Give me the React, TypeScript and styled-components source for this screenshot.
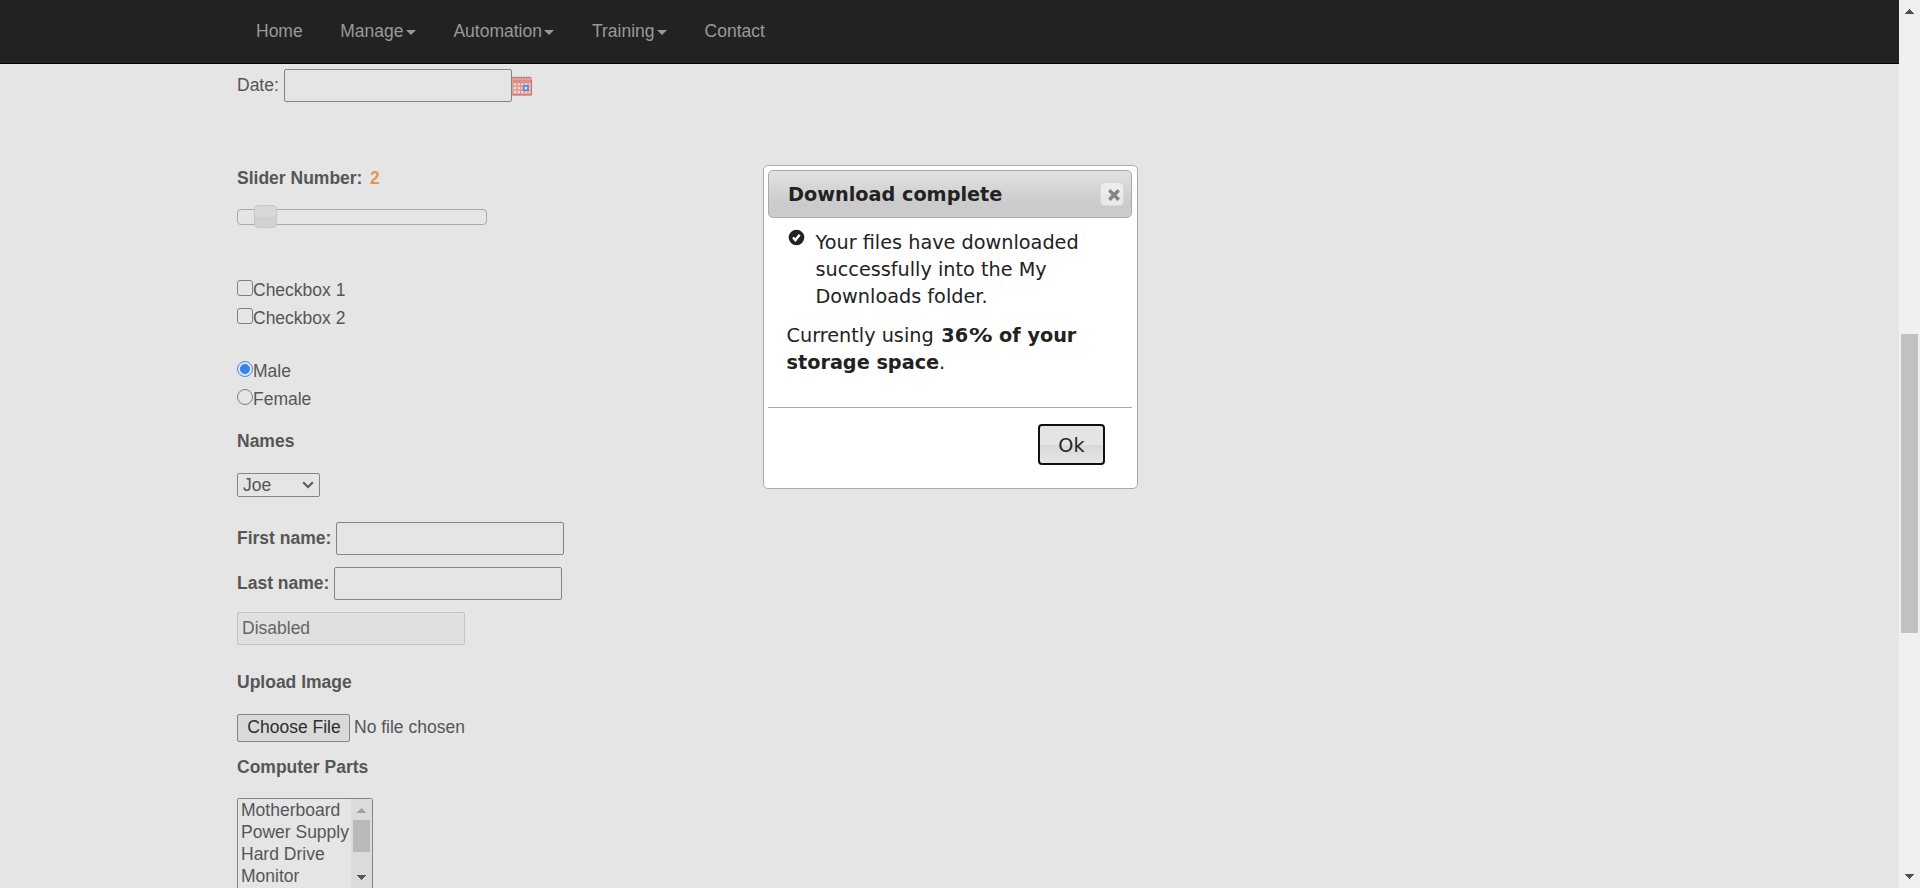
import React from 'react';
import styled, { createGlobalStyle } from 'styled-components';

const Global = createGlobalStyle`
  *, *::before, *::after { box-sizing: border-box; }
  html, body { margin: 0; padding: 0; overflow: hidden; }
  body { background: #e5e5e5; color: #565656; font: 17.5px/28px "Liberation Sans", Arial, sans-serif; }
  input, select, button { font: inherit; color: inherit; margin: 0; }
`;

const Screen = styled.div`
  display: flex;
  width: 1920px;
  height: 888px;
  overflow: hidden;
`;

const Page = styled.div`
  position: relative;
  flex: 1;
  display: flex;
  flex-direction: column;
`;

const Nav = styled.nav`
  height: 64px;
  flex: none;
  display: flex;
  align-items: flex-start;
  gap: 37.5px;
  padding: 17px 0 0 256px;
  background: #222;
  border-bottom: 1px solid #050505;
  color: #999;
`;

const NavItem = styled.a`
  display: flex;
  align-items: center;
  height: 28px;
`;

const Caret = styled.i`
  margin: 3px 0 0 2.5px;
  border: 5px solid transparent;
  border-top-color: #999;
  border-bottom: 0;
`;

const Form = styled.main`
  display: flex;
  flex-direction: column;
  align-items: flex-start;
  padding: 5px 0 0 237px;
`;

const Row = styled.div<{ $gap?: number; $before?: number }>`
  display: flex;
  align-items: center;
  white-space: pre;
  gap: ${p => p.$gap ?? 0}px;
  margin-top: ${p => p.$before ?? 0}px;
`;

const Heading = styled.div<{ $before: number }>`
  height: 28px;
  margin-top: ${p => p.$before}px;
  font-weight: bold;
  white-space: pre;
`;

const Value = styled.span`
  margin-left: 7.5px;
  color: #e6954a;
`;

const Label = styled.label<{ $bold?: boolean }>`
  margin-bottom: 2px;
  font-weight: ${p => (p.$bold ? 'bold' : 'normal')};
`;

const TextInput = styled.input`
  width: 228px;
  height: 33px;
  padding: 0 4px;
  border: 1px solid #858585;
  border-radius: 2px;
  background: transparent;
  &:disabled { border-color: #c3c3c3; background: #e0e0e0; color: #656565; }
`;

const Track = styled.div`
  width: 250px;
  height: 16px;
  margin-top: 17px;
  border: 1px solid #a9a9a9;
  border-radius: 4px;
`;

const Handle = styled.div`
  width: 23px;
  height: 23px;
  margin: -5px 0 0 16px;
  border: 1px solid #c8c8c8;
  border-radius: 4px;
  background: linear-gradient(#d7d7d7 0 48%, #cfcfcf 56%, #d3d3d3);
`;

const Tick = styled.input<{ $round?: boolean }>`
  appearance: none;
  width: 16px;
  height: 16px;
  margin-top: -4px;
  border: 1px solid #808080;
  border-radius: ${p => (p.$round ? '50%' : '3px')};
  background: transparent;
  &:checked {
    border-color: #4389e8;
    background: radial-gradient(circle, #3485ec 4.6px, transparent 5.3px);
  }
`;

const Select = styled.div`
  display: flex;
  align-items: center;
  justify-content: space-between;
  width: 83px;
  height: 24px;
  margin-top: 18px;
  padding: 0 5px;
  border: 1px solid #858585;
  border-radius: 2px;
  line-height: 22px;
`;

const FileButton = styled.button`
  width: 113px;
  height: 28px;
  padding: 0 0 2px 1px;
  line-height: 24px;
  border: 1px solid #858585;
  border-radius: 2px;
  background: #d9d9d9;
  color: #2d2d2d;
`;

const FileName = styled.span`
  margin-bottom: 2px;
`;

const ListBox = styled.div`
  display: flex;
  width: 136px;
  height: 100px;
  margin-top: 17px;
  border: 1px solid #858585;
  border-radius: 2px;
`;

const Options = styled.div`
  flex: 1;
  padding: 0 0 0 3px;
  line-height: 22px;
  white-space: nowrap;
`;

const ListBar = styled.div`
  display: flex;
  flex-direction: column;
  align-items: center;
  width: 21px;
  background: #dbdbdb;
`;

const ListThumb = styled.div`
  width: 17px;
  height: 32px;
  margin: 7px 0 23px;
  background: #b9b9b9;
`;

const Arrow = styled.svg<{ $before: number }>`
  display: block;
  flex: none;
  margin-top: ${p => p.$before}px;
`;

const PageBar = styled.div`
  display: flex;
  flex-direction: column;
  align-items: center;
  width: 21px;
  background: #f0f0f0;
`;

const PageThumb = styled.div`
  width: 17px;
  height: 299px;
  margin: 320px 0 241px;
  background: #c1c1c1;
`;

const Calendar = styled.svg`
  margin-top: 1px;
`;

const Dialog = styled.section`
  position: absolute;
  left: 763px;
  top: 165px;
  width: 375px;
  height: 324px;
  padding: 4px;
  border: 1px solid #aaa;
  border-radius: 5px;
  background: #fff;
  color: #222;
  font: 19.25px/27px "DejaVu Sans", Verdana, sans-serif;
`;

const TitleBar = styled.header`
  display: flex;
  align-items: center;
  justify-content: space-between;
  width: 364px;
  height: 48px;
  padding: 0 7px 0 19px;
  border: 1px solid #aaa;
  border-radius: 5px;
  background: linear-gradient(#e2e2e2, #cbcbcb 70%, #cbcbcb);
  font-weight: bold;
`;

const Close = styled.button`
  display: flex;
  align-items: center;
  justify-content: center;
  width: 24px;
  height: 24px;
  margin-bottom: 1px;
  padding: 2px 0 0 3px;
  border: 1px solid #d6d6d6;
  border-radius: 4px;
  background: linear-gradient(#ededed 48%, #e6e6e6 55%, #ebebeb);
`;

const Message = styled.div`
  display: flex;
  gap: 10.5px;
  margin-top: 11px;
  padding-left: 20px;
  white-space: pre;
`;

const CheckMark = styled.svg`
  flex: none;
`;

const Usage = styled.div`
  margin-top: 12px;
  padding-left: 18.5px;
  white-space: pre;
`;

const Share = styled.b`
  margin-left: 1.5px;
`;

const Percent = styled.span`
  display: inline-block;
  margin: 0 2.5px;
  transform: scaleX(1.22);
`;

const Actions = styled.footer`
  display: flex;
  justify-content: flex-end;
  width: 364px;
  margin-top: 31px;
  padding: 16px 27px 0 0;
  border-top: 1px solid #aaa;
`;

const OkButton = styled.button`
  width: 67px;
  height: 41px;
  padding: 1px 0 0;
  border: 2px solid #101010;
  border-radius: 4px;
  background: linear-gradient(#e4e4e4 50%, #d8d8d8 53%, #e6e6e6);
`;

const up = 'M4 0h1v1h1v1h1v1h1v1h1v1H0V4h1V3h1V2h1V1h1z';
const down = 'M0 0h9v1H8v1H7v1H6v1H5v1H4V4H3V3H2V2H1V1H0z';

const ScrollArrow = ({ d, fill, before }: { d: string; fill: string; before: number }) => (
  <Arrow $before={before} width="9" height="5" viewBox="0 0 9 5" shapeRendering="crispEdges">
    <path d={d} fill={fill} />
  </Arrow>
);

const CalendarIcon = () => (
  <Calendar width="20" height="20" viewBox="0 0 20 20">
    <rect x="0.2" y="1" width="19.6" height="18.5" fill="#dd8e88" />
    <path d="M1 1.4h18" stroke="#98706c" strokeWidth="1.2" strokeDasharray="1.3 1.3" />
    <path d="M1 3h18" stroke="#e8b0ab" strokeWidth="1" />
    <path d="M1.5 6.5h17v11h-17z" fill="#e9d6d4" />
    <path d="M1.5 6.7h17M1.5 10.2h17M1.5 13.9h17M5 6.5v11M8.7 6.5v11M12.3 6.5v11M16 6.5v11" stroke="#df8f88" strokeWidth="1.2" />
    <rect x="11.6" y="9.9" width="4.4" height="4.4" fill="#d7e1f4" stroke="#5484dc" strokeWidth="1.7" />
    <path d="M0.5 18.9h19V4" fill="none" stroke="#c2706b" />
  </Calendar>
);

const navItems = [
  { label: 'Home', menu: false },
  { label: 'Manage', menu: true },
  { label: 'Automation', menu: true },
  { label: 'Training', menu: true },
  { label: 'Contact', menu: false },
];

export default function App() {
  return (
    <Screen>
      <Global />
      <Page>
        <Nav>
          {navItems.map(item => (
            <NavItem key={item.label}>
              {item.label}
              {item.menu && <Caret />}
            </NavItem>
          ))}
        </Nav>
        <Form>
          <Row>
            <Label>Date: </Label>
            <TextInput />
            <CalendarIcon />
          </Row>
          <Heading $before={62}>Slider Number:<Value>2</Value></Heading>
          <Track><Handle /></Track>
          <Row $before={51}><Tick type="checkbox" />Checkbox 1</Row>
          <Row><Tick type="checkbox" />Checkbox 2</Row>
          <Row $before={25}><Tick type="radio" name="sex" $round defaultChecked />Male</Row>
          <Row><Tick type="radio" name="sex" $round />Female</Row>
          <Heading $before={14}>Names</Heading>
          <Select>
            Joe
            <svg width="12" height="8" viewBox="0 0 12 8">
              <path d="M1.2 1.3 6 6.1l4.8-4.8" fill="none" stroke="#565656" strokeWidth="2" />
            </svg>
          </Select>
          <Row $before={25}><Label $bold>First name: </Label><TextInput /></Row>
          <Row $before={12}><Label $bold>Last name: </Label><TextInput /></Row>
          <Row $before={12}><TextInput disabled defaultValue="Disabled" /></Row>
          <Heading $before={23}>Upload Image</Heading>
          <Row $before={17} $gap={4}>
            <FileButton>Choose File</FileButton>
            <FileName>No file chosen</FileName>
          </Row>
          <Heading $before={10}>Computer Parts</Heading>
          <ListBox>
            <Options>
              {['Motherboard', 'Power Supply', 'Hard Drive', 'Monitor'].map(name => (
                <div key={name}>{name}</div>
              ))}
            </Options>
            <ListBar>
              <ScrollArrow d={up} fill="#a0a0a0" before={9} />
              <ListThumb />
              <ScrollArrow d={down} fill="#565656" before={0} />
            </ListBar>
          </ListBox>
        </Form>
        <Dialog>
          <TitleBar>
            Download complete
            <Close aria-label="Close">
              <svg width="14" height="14" viewBox="0 0 14 14">
                <path d="M3.5 3.5l7 7M10.5 3.5l-7 7" stroke="#858585" strokeWidth="3.4" strokeLinecap="square" />
              </svg>
            </Close>
          </TitleBar>
          <Message>
            <CheckMark width="17" height="17" viewBox="0 0 17 17">
              <circle cx="8.5" cy="8.5" r="7.8" fill="#222" />
              <path d="M5 8.5l2.4 2.6 4.3-5.3" fill="none" stroke="#fff" strokeWidth="2.4" />
            </CheckMark>
            <div>
              Your files have downloaded<br />
              successfully into the My<br />
              Downloads folder.
            </div>
          </Message>
          <Usage>
            Currently using <Share>36<Percent>%</Percent> of your</Share><br />
            <b>storage space</b>.
          </Usage>
          <Actions>
            <OkButton>Ok</OkButton>
          </Actions>
        </Dialog>
      </Page>
      <PageBar>
        <ScrollArrow d={up} fill="#505050" before={9} />
        <PageThumb />
        <ScrollArrow d={down} fill="#505050" before={0} />
      </PageBar>
    </Screen>
  );
}
